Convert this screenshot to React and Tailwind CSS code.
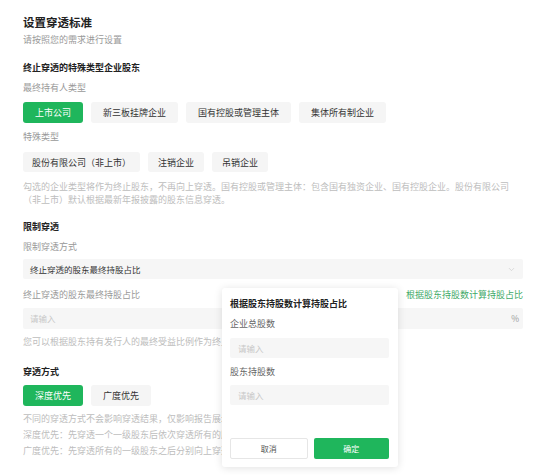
import React from "react";
import { ChevronDown } from "lucide-react";

const font = { fontFamily: '"Noto Sans CJK SC", "Noto Sans", sans-serif' };

function Chip({ active, children, pad = "px-3", h = "h-[21px]" }) {
  return (
    <button
      className={
        "flex items-center rounded-[3px] text-[9px] leading-none " +
        pad +
        " " +
        h +
        (active ? " bg-[#1fb65c] text-white" : " bg-[#f5f5f5] text-[#333]")
      }
    >
      {children}
    </button>
  );
}

export default function App() {
  return (
    <div className="relative w-[550px] h-[475px] overflow-hidden bg-white" style={font}>
      <div className="pl-[23px] pr-[27px] pt-[14px]">
        {/* header */}
        <h1 className="text-[11.5px] leading-[16px] font-semibold text-[#222]">设置穿透标准</h1>
        <p className="mt-[3px] text-[9px] leading-[14px] text-[#999]">请按照您的需求进行设置</p>

        {/* 终止穿透 */}
        <h2 className="mt-[14px] text-[9px] leading-[14px] font-bold text-[#222]">终止穿透的特殊类型企业股东</h2>
        <p className="mt-[6px] text-[9px] leading-[14px] text-[#999]">最终持有人类型</p>
        <div className="mt-[7px] flex gap-2">
          <Chip active>上市公司</Chip>
          <Chip>新三板挂牌企业</Chip>
          <Chip>国有控股或管理主体</Chip>
          <Chip>集体所有制企业</Chip>
        </div>
        <p className="mt-[7px] text-[9px] leading-[14px] text-[#999]">特殊类型</p>
        <div className="mt-[8px] flex gap-2">
          <Chip pad="px-[9px]" h="h-[20px]">股份有限公司（非上市）</Chip>
          <Chip pad="px-[10px]" h="h-[20px]">注销企业</Chip>
          <Chip pad="px-[10px]" h="h-[20px]">吊销企业</Chip>
        </div>
        <p className="mt-[8px] text-[9px] leading-[13px] text-[#bdbdbd]">
          勾选的企业类型将作为终止股东，不再向上穿透。国有控股或管理主体：包含国有独资企业、国有控股企业。股份有限公司（非上市）默认根据最新年报披露的股东信息穿透。
        </p>

        {/* 限制穿透 */}
        <h2 className="mt-[14px] text-[9px] leading-[14px] font-bold text-[#222]">限制穿透</h2>
        <p className="mt-[6px] text-[9px] leading-[14px] text-[#999]">限制穿透方式</p>
        <div className="mt-[5px] h-[20px] flex items-center justify-between bg-[#f6f6f6] rounded-[2px] pl-[7px] pr-[7px]">
          <span className="text-[8.5px] text-[#333]">终止穿透的股东最终持股占比</span>
          <ChevronDown size={9} strokeWidth={1.5} className="text-[#c4c4c4]" />
        </div>
        <div className="mt-[9px] flex items-center justify-between">
          <span className="text-[9px] leading-[14px] text-[#999]">终止穿透的股东最终持股占比</span>
          <span className="text-[9px] leading-[14px] text-[#3faa68]">根据股东持股数计算持股占比</span>
        </div>
        <div className="mt-[6px] h-[21px] flex items-center justify-between bg-[#f6f6f6] rounded-[2px] pl-[7px] pr-[4px]">
          <span className="text-[8.5px] text-[#c8c8c8]">请输入</span>
          <span className="text-[8.5px] text-[#999]">%</span>
        </div>
        <p className="mt-[6px] text-[9px] leading-[14px] text-[#bdbdbd]">
          您可以根据股东持有发行人的最终受益比例作为终止穿透的条件
        </p>

        {/* 穿透方式 */}
        <h2 className="mt-[16px] text-[9px] leading-[14px] font-bold text-[#222]">穿透方式</h2>
        <div className="mt-[6px] flex gap-2">
          <Chip active>深度优先</Chip>
          <Chip>广度优先</Chip>
        </div>
        <div className="mt-[5px] text-[9px] leading-[16px] text-[#bdbdbd]">
          <p>不同的穿透方式不会影响穿透结果，仅影响报告展示顺序</p>
          <p>深度优先：先穿透一个一级股东后依次穿透所有的股东</p>
          <p>广度优先：先穿透所有的一级股东之后分别向上穿透</p>
        </div>
      </div>

      {/* popover over the form */}
      <div className="absolute left-[222px] top-[288px] w-[176px] h-[179px] bg-white rounded-[3px] shadow-[0_1px_8px_rgba(0,0,0,0.12)] px-[8px] pt-[9px] pb-[8px] flex flex-col">
        <p className="text-[9px] leading-[14px] font-bold text-[#222]">根据股东持股数计算持股占比</p>
        <p className="mt-[6px] text-[9px] leading-[14px] text-[#666]">企业总股数</p>
        <div className="mt-[7px] h-[20px] flex items-center bg-[#f6f6f6] rounded-[2px] pl-[8px] mr-px">
          <span className="text-[8.5px] text-[#c8c8c8]">请输入</span>
        </div>
        <p className="mt-[7px] text-[9px] leading-[14px] text-[#666]">股东持股数</p>
        <div className="mt-[6px] h-[20px] flex items-center bg-[#f6f6f6] rounded-[2px] pl-[8px] mr-px">
          <span className="text-[8.5px] text-[#c8c8c8]">请输入</span>
        </div>
        <div className="mt-auto flex gap-[6px] mr-px">
          <button className="flex-1 h-[21px] rounded-[2px] border border-[#e6e6e6] bg-white text-[8px] text-[#555]">取消</button>
          <button className="flex-1 h-[21px] rounded-[2px] bg-[#1fb65c] text-[8px] text-white">确定</button>
        </div>
      </div>
    </div>
  );
}
